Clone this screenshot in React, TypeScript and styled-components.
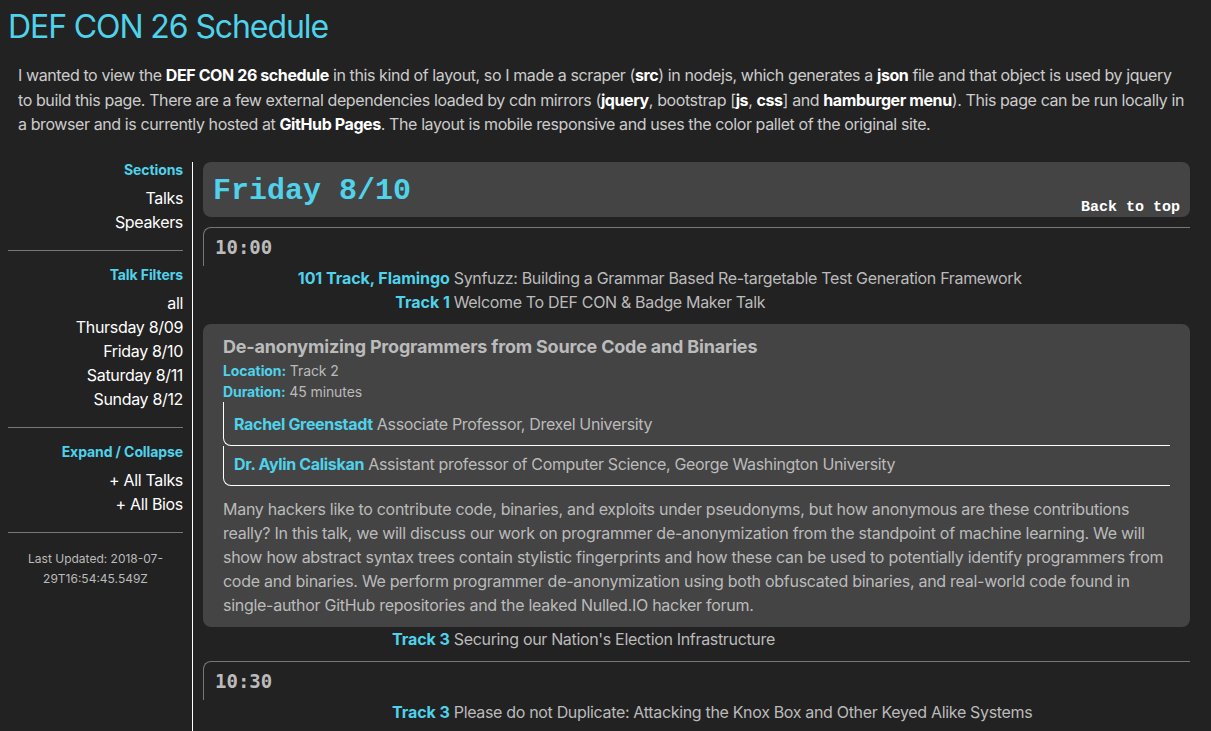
import React from 'react';
import styled, { createGlobalStyle } from 'styled-components';

const CYAN = '#4fd2ea';

const GlobalStyle = createGlobalStyle`
  html, body {
    background: #222;
  }
  body {
    margin: 8px;
    font-family: Inter, "Noto Sans", "Liberation Sans", sans-serif;
    color: #ccc;
    letter-spacing: -0.33px;
  }
`;

const Title = styled.h1`
  margin: 0;
  font-size: 32px;
  line-height: 38px;
  font-weight: 400;
  letter-spacing: -1.1px;
  color: ${CYAN};
`;

const Intro = styled.p`
  margin: 17px 16px 0 10px;
  font-size: 16px;
  line-height: 24.5px;
  letter-spacing: -0.4px;
  color: #ccc;

  b {
    color: #fff;
  }
`;

const Layout = styled.div`
  display: flex;
  margin-top: 25px;
`;

const Sidebar = styled.nav`
  flex: 0 0 175px;
  padding-right: 9px;
  border-right: 1px solid #fff;
  text-align: right;
  min-height: 600px;
`;

const SideHeading = styled.div`
  font-size: 14px;
  line-height: 16px;
  font-weight: 700;
  letter-spacing: -0.1px;
  color: ${CYAN};
  margin-bottom: 8px;
`;

const SideLink = styled.div`
  font-size: 16px;
  line-height: 24px;
  color: #fff;
`;

const SideRule = styled.hr`
  border: 0;
  border-top: 1px solid #777;
  margin: 16px 0 16px -1px;
`;

const Updated = styled.div`
  margin-top: 13px;
  text-align: center;
  font-size: 12px;
  line-height: 20px;
  letter-spacing: 0;
  color: #bbb;
`;

const Main = styled.main`
  flex: 1;
  margin: 0 13px 0 10px;
`;

const DayHeader = styled.div`
  display: flex;
  justify-content: space-between;
  height: 55px;
  padding: 0 10px;
  background: #444;
  border-radius: 8px;
`;

const DayTitle = styled.h2`
  margin: 0;
  align-self: center;
  padding-top: 3px;
  font-family: "Liberation Mono", "Courier New", monospace;
  font-size: 30px;
  line-height: 30px;
  font-weight: 700;
  letter-spacing: 0;
  color: ${CYAN};
`;

const BackToTop = styled.a`
  align-self: flex-end;
  padding-bottom: 2px;
  font-family: "Liberation Mono", "Courier New", monospace;
  font-size: 15px;
  line-height: 15px;
  font-weight: 700;
  letter-spacing: 0;
  color: #fff;
  text-decoration: none;
`;

const Slot = styled.div`
  margin-top: 10px;
  height: 38px;
  padding-left: 11px;
  border-top: 1px solid #777;
  border-left: 1px solid #777;
  border-top-left-radius: 8px;
  display: flex;
  align-items: center;
  font-family: "DejaVu Sans Mono", "Liberation Mono", monospace;
  font-size: 19px;
  font-weight: 700;
  letter-spacing: 0;
  color: #bbb;
`;

const Row = styled.div`
  display: flex;
  font-size: 16px;
  line-height: 24px;
  color: #bbb;
`;

const Track = styled.span`
  flex: 0 0 25%;
  text-align: right;
  font-weight: 700;
  letter-spacing: -0.05px;
  color: ${CYAN};
`;

const RowTitle = styled.span`
  margin-left: 4px;
`;

const Card = styled.div`
  margin-top: 10px;
  padding: 12px 20px 10px 20px;
  background: #444;
  border-radius: 8px;
  color: #bbb;
`;

const CardTitle = styled.h3`
  margin: 0 0 2px 0;
  font-size: 18px;
  line-height: 22px;
  font-weight: 700;
  letter-spacing: -0.2px;
  color: #bbb;
`;

const Meta = styled.div`
  font-size: 14px;
  line-height: 21px;
  letter-spacing: -0.1px;

  b {
    color: ${CYAN};
  }
`;

const Speaker = styled.div`
  padding: 6px 10px 9px 10px;
  font-size: 16px;
  line-height: 24px;
  border-left: 1px solid #fff;
  border-bottom: 1px solid #fff;
  border-bottom-left-radius: 8px;

  &:first-child {
    padding-top: 10px;
  }

  b {
    color: ${CYAN};
  }
`;

const Description = styled.p`
  margin: 11px 0 0 0;
  font-size: 16px;
  line-height: 24px;
  letter-spacing: -0.28px;
`;

const TalkRow: React.FC<{ track: string; title: string }> = ({ track, title }) => (
  <Row>
    <Track>{track}</Track>
    <RowTitle>{title}</RowTitle>
  </Row>
);

export default function App() {
  return (
    <>
      <GlobalStyle />
      <Title>DEF CON 26 Schedule</Title>
      <Intro>
        I wanted to view the <b>DEF CON 26 schedule</b> in this kind of layout, so I made a scraper (<b>src</b>) in
        nodejs, which generates a <b>json</b> file and that object is used by jquery
        <br />
        to build this page. There are a few external dependencies loaded by cdn mirrors (<b>jquery</b>, bootstrap [
        <b>js</b>, <b>css</b>] and <b>hamburger menu</b>). This page can be run locally in a browser and is currently
        hosted at <b>GitHub Pages</b>. The layout is mobile responsive and uses the color pallet of the original site.
      </Intro>
      <Layout>
        <Sidebar>
          <SideHeading>Sections</SideHeading>
          <SideLink>Talks</SideLink>
          <SideLink>Speakers</SideLink>
          <SideRule />
          <SideHeading>Talk Filters</SideHeading>
          <SideLink>all</SideLink>
          <SideLink>Thursday 8/09</SideLink>
          <SideLink>Friday 8/10</SideLink>
          <SideLink>Saturday 8/11</SideLink>
          <SideLink>Sunday 8/12</SideLink>
          <SideRule />
          <SideHeading>Expand / Collapse</SideHeading>
          <SideLink>+ All Talks</SideLink>
          <SideLink>+ All Bios</SideLink>
          <SideRule />
          <Updated>Last Updated: 2018-07-29T16:54:45.549Z</Updated>
        </Sidebar>
        <Main>
          <DayHeader>
            <DayTitle>Friday 8/10</DayTitle>
            <BackToTop href="#">Back to top</BackToTop>
          </DayHeader>
          <Slot>10:00</Slot>
          <TalkRow track="101 Track, Flamingo" title="Synfuzz: Building a Grammar Based Re-targetable Test Generation Framework" />
          <TalkRow track="Track 1" title="Welcome To DEF CON & Badge Maker Talk" />
          <Card>
            <CardTitle>De-anonymizing Programmers from Source Code and Binaries</CardTitle>
            <Meta>
              <b>Location:</b> Track 2
            </Meta>
            <Meta>
              <b>Duration:</b> 45 minutes
            </Meta>
            <div>
              <Speaker>
                <b>Rachel Greenstadt</b> Associate Professor, Drexel University
              </Speaker>
              <Speaker>
                <b>Dr. Aylin Caliskan</b> Assistant professor of Computer Science, George Washington University
              </Speaker>
            </div>
            <Description>
              Many hackers like to contribute code, binaries, and exploits under pseudonyms, but how anonymous are these
              contributions really? In this talk, we will discuss our work on programmer de-anonymization from the
              standpoint of machine learning. We will show how abstract syntax trees contain stylistic fingerprints and
              how these can be used to potentially identify programmers from code and binaries. We perform programmer
              de-anonymization using both obfuscated binaries, and real-world code found in single-author GitHub
              repositories and the leaked Nulled.IO hacker forum.
            </Description>
          </Card>
          <TalkRow track="Track 3" title="Securing our Nation's Election Infrastructure" />
          <Slot>10:30</Slot>
          <TalkRow track="Track 3" title="Please do not Duplicate: Attacking the Knox Box and Other Keyed Alike Systems" />
        </Main>
      </Layout>
    </>
  );
}
